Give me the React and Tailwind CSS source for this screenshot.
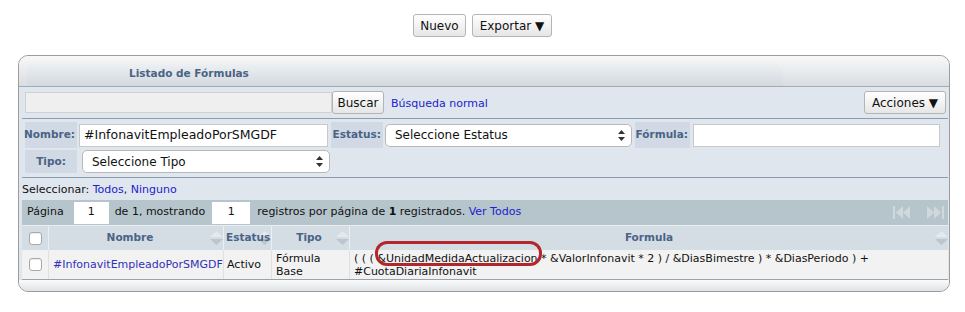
import React from 'react';

const SortArrows = () => (
  <svg width="13" height="14" viewBox="0 0 13 14" className="shrink-0">
    <path d="M6.5 0 L13 6 L0 6 Z" fill="#e3e9ee" />
    <path d="M0 8 L13 8 L6.5 14 Z" fill="#bcc6ce" />
  </svg>
);

const SelectArrows = () => (
  <svg width="7" height="11" viewBox="0 0 7 11">
    <path d="M3.5 0 L7 4 L0 4 Z" fill="#333" />
    <path d="M0 7 L7 7 L3.5 11 Z" fill="#333" />
  </svg>
);

const Checkbox = () => (
  <div className="w-[13px] h-[13px] rounded-[3px] border border-[#a8a8a8] bg-white shadow-[inset_0_1px_1px_rgba(0,0,0,0.08)]" />
);

const Button = ({ children, className = '' }) => (
  <div
    className={`h-[23px] flex items-center whitespace-nowrap rounded-[3px] border border-[#b4b4b4] bg-gradient-to-b from-[#ffffff] to-[#e6e6e6] text-[12px] text-[#111] ${className}`}
  >
    {children}
  </div>
);

const Label = ({ children, className = '' }) => (
  <div className={`h-full flex items-center bg-[#d1dae4] font-bold text-[#4a6386] text-[10.5px] whitespace-nowrap ${className}`}>
    {children}
  </div>
);

const Select = ({ text, className = '' }) => (
  <div
    className={`h-[23px] flex items-center justify-between rounded-[5px] border border-[#b9b9b9] bg-white pl-[9px] pr-[6px] text-[12px] text-[#111] ${className}`}
  >
    <span>{text}</span>
    <SelectArrows />
  </div>
);

const NavIcon = ({ flip }) => (
  <svg width="19" height="13" viewBox="0 0 19 13" className={flip ? 'scale-x-[-1]' : ''}>
    <rect x="0" y="0" width="2" height="13" fill="#d0d8dd" />
    <path d="M3 6.5 L10 0 L10 13 Z" fill="#d0d8dd" />
    <path d="M10 6.5 L17 0 L17 13 Z" fill="#d0d8dd" />
  </svg>
);

const HeadCell = ({ children, className = '', arrows = true }) => (
  <div className={`relative h-full flex items-center border-r border-[#eaeff3] font-bold text-[#4a6386] text-[10.5px] ${className}`}>
    {arrows && (
      <div className="absolute right-[0px] top-[5px]">
        <SortArrows />
      </div>
    )}
    <span className="relative whitespace-nowrap">{children}</span>
  </div>
);

export default function App() {
  return (
    <div className="w-[965px] h-[312px] bg-white pt-[14px] text-[11px] text-[#111] font-['DejaVu_Sans',sans-serif] relative">
      {/* top buttons */}
      <div className="flex justify-center gap-[6px]">
        <Button className="w-[53px] justify-center">Nuevo</Button>
        <Button className="w-[80px] justify-center">Exportar ▼</Button>
      </div>

      {/* panel */}
      <div className="ml-[18px] mt-[18px] w-[932px] h-[237px] border border-[#9c9c9c] rounded-[10px] overflow-hidden bg-[#dfe6ee] flex flex-col">
        {/* header */}
        <div className="h-[31px] shrink-0 flex items-end pl-[8px] bg-gradient-to-b from-[#f8f8f8] to-[#d9dde1] border-b border-[#a2aab2]">
          <div className="w-[755px] h-[25px] rounded-tl-[10px] rounded-tr-[12px] bg-gradient-to-b from-[#f1f3f5] to-[#d3d9de] pl-[102px] flex items-center font-bold text-[10.5px] text-[#4a6386]">
            Listado de Fórmulas
          </div>
        </div>

        <div className="pl-[3px] pr-[1px] flex flex-col">
          {/* search row */}
          <div className="h-[32px] flex items-center pl-[3px] pr-[2px] border-b border-[#8c9cae]">
            <div className="w-[307px] h-[21px] bg-[#efefef] border border-[#d0d0d0]" />
            <Button className="w-[52px] justify-center">Buscar</Button>
            <span className="ml-[7px] mt-[3px] text-[#2222cc]">Búsqueda normal</span>
            <Button className="ml-auto w-[82px] justify-center">Acciones ▼</Button>
          </div>

          {/* filters */}
          <div className="pt-[3px] pb-[4px] pl-[3px] border-b border-[#8c9cae] flex flex-col gap-[2px]">
            <div className="h-[26px] flex items-center">
              <Label className="w-[52px] justify-end pr-[2px]">Nombre:</Label>
              <div className="ml-[2px] w-[249px] h-[23px] bg-white border border-[#c9c9c9] flex items-center pl-[4px] text-[12.5px]">
                #InfonavitEmpleadoPorSMGDF
              </div>
              <Label className="ml-[3px] w-[52px] justify-end pr-[2px]">Estatus:</Label>
              <Select text="Seleccione Estatus" className="ml-[2px] w-[247px]" />
              <Label className="ml-[3px] w-[55px] justify-end pr-[2px]">Fórmula:</Label>
              <div className="ml-[3px] w-[247px] h-[23px] bg-white border border-[#c9c9c9]" />
            </div>
            <div className="h-[23px] flex items-center">
              <Label className="w-[52px] justify-center">Tipo:</Label>
              <Select text="Seleccione Tipo" className="ml-[5px] w-[248px]" />
            </div>
          </div>

          {/* select all */}
          <div className="h-[22px] flex items-center pt-[2px]">
            Seleccionar:&nbsp;<span className="text-[#2222cc]">Todos</span>,&nbsp;<span className="text-[#2222cc]">Ninguno</span>
          </div>

          {/* pagination */}
          <div className="h-[25px] bg-[#b6c4cc] flex items-center pl-[5px] pr-[4px]">
            <span>Página</span>
            <div className="ml-[10px] w-[35px] h-[22px] bg-white flex items-center justify-center">1</div>
            <span className="ml-[6px]">de 1, mostrando</span>
            <div className="ml-[7px] w-[38px] h-[22px] bg-white flex items-center justify-center">1</div>
            <span className="ml-[7px]">
              registros por página de <b>1</b> registrados.{' '}
              <span className="text-[#2222cc]">Ver Todos</span>
            </span>
            <div className="ml-auto flex items-center gap-[13px]">
              <NavIcon />
              <NavIcon flip />
            </div>
          </div>

          {/* table header */}
          <div className="h-[25px] bg-[#d4dde4] flex border-t border-[#e6ecf0]">
            <HeadCell className="w-[27px] justify-center" arrows={false}>
              <Checkbox />
            </HeadCell>
            <HeadCell className="w-[175px] justify-center pr-[12px]">Nombre</HeadCell>
            <HeadCell className="w-[48px] pl-[2px]">Estatus</HeadCell>
            <HeadCell className="w-[78px] justify-center pr-[3px]">Tipo</HeadCell>
            <HeadCell className="flex-1 justify-center border-r-0">Formula</HeadCell>
          </div>

          {/* data row */}
          <div className="h-[30px] bg-[#f2f2f2] flex border-b border-[#9aa3ab] leading-[13px]">
            <div className="w-[27px] flex items-center justify-center border-r border-[#e0e0e0]">
              <Checkbox />
            </div>
            <div className="w-[175px] flex items-center pl-[4px] text-[#3131b8] border-r border-[#e0e0e0] whitespace-nowrap">
              #InfonavitEmpleadoPorSMGDF
            </div>
            <div className="w-[48px] flex items-center pl-[3px] border-r border-[#e0e0e0]">Activo</div>
            <div className="w-[78px] flex items-center pl-[4px] border-r border-[#e0e0e0]">
              Fórmula
              <br />
              Base
            </div>
            <div className="flex-1 flex items-center pl-[4px]">
              <div>
                ( ( ( &amp;UnidadMedidaActualizacion * &amp;ValorInfonavit * 2 ) / &amp;DiasBimestre ) * &amp;DiasPeriodo ) +
                <br />
                #CuotaDiariaInfonavit
              </div>
            </div>
          </div>
        </div>

        {/* footer */}
        <div className="flex-1 bg-gradient-to-b from-[#fbfbfb] to-[#dfe3e6]" />
      </div>

      {/* annotation */}
      <div className="absolute left-[375px] top-[241px] w-[167px] h-[25px] border-[3px] border-[#b3272c] rounded-[12px]" />
    </div>
  );
}
